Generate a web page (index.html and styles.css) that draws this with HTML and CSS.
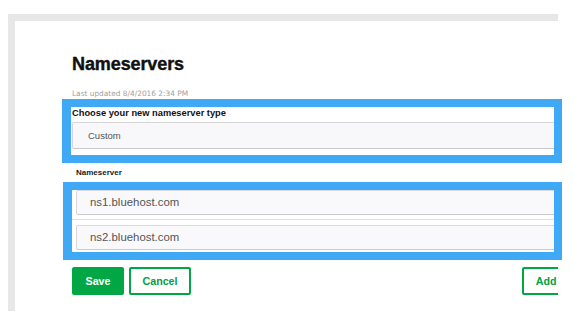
FILE: index.html
```html
<!DOCTYPE html>
<html lang="en">
<head>
    <meta charset="UTF-8">
    <meta name="viewport" content="width=device-width, initial-scale=1.0">
    <title>Nameservers</title>
    <link rel="stylesheet" href="styles.css">
</head>
<body>
    <div class="frame">
        <main class="panel">
            <h1 class="title">Nameservers</h1>
            <p class="updated">Last updated 8/4/2016 2:34 PM</p>

            <section class="type-section">
                <label class="type-label" for="ns-type">Choose your new nameserver type</label>
                <div class="select" id="ns-type">Custom</div>
            </section>

            <section class="ns-section">
                <div class="ns-label">Nameserver</div>
                <div class="ns-list">
                    <div class="ns-row">
                        <div class="ns-input">ns1.bluehost.com</div>
                    </div>
                    <div class="ns-row">
                        <div class="ns-input">ns2.bluehost.com</div>
                    </div>
                </div>
            </section>

            <div class="actions">
                <div class="actions-left">
                    <button class="btn btn-primary">Save</button>
                    <button class="btn btn-outline">Cancel</button>
                </div>
                <button class="btn btn-outline">Add</button>
            </div>
        </main>
    </div>

    <!-- recuadros azules de anotacion -->
    <div class="mark mark-type"></div>
    <div class="mark mark-ns"></div>
</body>
</html>
```

FILE: styles.css
```css
/* Estilos generales */
body {
    font-family: 'Liberation Sans', Arial, sans-serif;
    margin: 0;
    padding: 0;
    background-color: #ffffff;
    position: relative;
    height: 327px;
    overflow: hidden;
}

/* Marco gris (captura recortada) */
.frame {
    margin: 14px 0 0 8px;
    width: 543px;
    height: 290px;
    border-left: 7px solid #e7e7e7;
    border-top: 7px solid #e7e7e7;
    background-color: #ffffff;
    overflow: hidden;
}

.panel {
    width: 498px;
    padding: 32px 0 0 57px;
}

.title {
    font-size: 18px;
    line-height: 22px;
    font-weight: 700;
    color: #111111;
    margin: 0;
    letter-spacing: -0.1px;
    -webkit-text-stroke: 0.4px #111111;
}

.updated {
    font-family: 'DejaVu Sans', Verdana, sans-serif;
    font-size: 7.4px;
    line-height: 10px;
    color: #a0a0a0;
    margin: 14px 0 0;
}

/* Tipo de nameserver */
.type-section {
    margin-top: 8px;
}

.type-label {
    display: block;
    font-size: 9.3px;
    line-height: 12px;
    font-weight: 700;
    color: #111111;
    margin-bottom: 3px;
}

.select {
    height: 25px;
    line-height: 25px;
    padding-left: 15px;
    font-size: 9.5px;
    color: #555555;
    background-color: #f8f8fa;
    border: 1px solid #d6d6d8;
    border-bottom-color: #c9c9cb;
    border-radius: 2px;
}

/* Lista de nameservers */
.ns-section {
    margin-top: 19px;
}

.ns-label {
    font-size: 8px;
    line-height: 10px;
    font-weight: 700;
    color: #222222;
    padding-left: 4px;
}

.ns-list {
    margin-top: 12px;
}

.ns-row {
    padding: 0 0 4px 4px;
    border-bottom: 1px solid #e2e2e4;
}

.ns-row + .ns-row {
    padding-top: 5px;
    border-bottom: none;
    padding-bottom: 0;
}

.ns-input {
    height: 23px;
    line-height: 23px;
    padding-left: 13px;
    font-size: 11.4px;
    color: #555555;
    background-color: #f9f9fb;
    border: 1px solid #d9d9db;
    border-bottom-color: #cbcbcd;
    border-radius: 2px;
}

/* Botones */
.actions {
    margin-top: 17px;
    display: flex;
    justify-content: space-between;
}

.actions-left {
    display: flex;
    gap: 5px;
}

.btn {
    font-family: 'Liberation Sans', Arial, sans-serif;
    font-size: 10.7px;
    font-weight: 700;
    height: 28px;
    padding: 0 11.5px;
    border: 2px solid #00a744;
    border-radius: 2px;
    cursor: pointer;
}

.btn-primary {
    background-color: #00a744;
    color: #ffffff;
}

.btn-outline {
    background-color: #ffffff;
    color: #00a043;
}

/* Recuadros de anotacion */
.mark {
    position: absolute;
    border: 8px solid #3fa9f5;
    border-left-width: 9px;
    box-sizing: border-box;
    pointer-events: none;
}

.mark-type {
    left: 62px;
    top: 99px;
    width: 500px;
    height: 64px;
}

.mark-ns {
    left: 63px;
    top: 182px;
    width: 499px;
    height: 78px;
}
```
